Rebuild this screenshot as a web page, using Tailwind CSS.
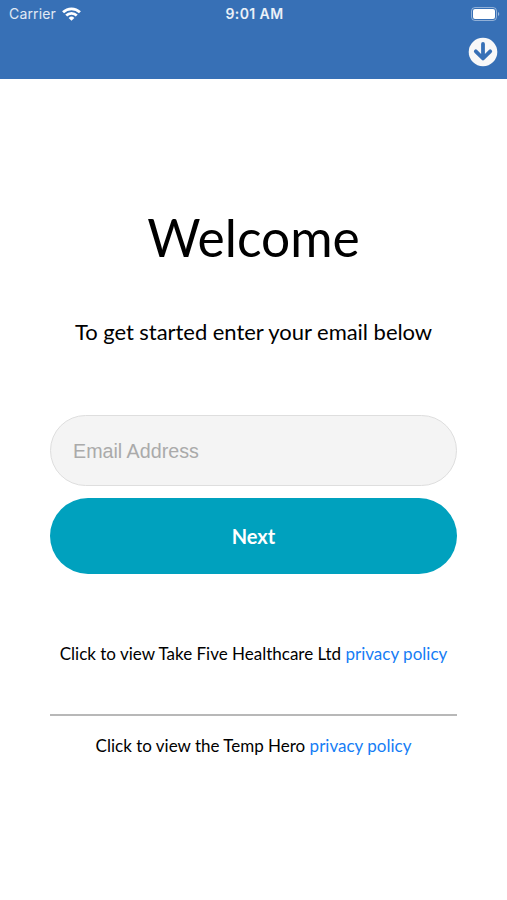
<!DOCTYPE html>
<html lang="en">
<head>
    <meta charset="UTF-8">
    <meta name="viewport" content="width=device-width, initial-scale=1.0">
    <title>Welcome</title>
    <script src="https://cdn.jsdelivr.net/npm/@tailwindcss/browser@4"></script>
</head>
<body class="h-[900px] overflow-hidden bg-white font-['Lato',sans-serif] text-black">
    <header class="h-[79px] bg-[#3770b6] text-white">
        <div class="grid h-[27px] grid-cols-3 items-center pl-[9px] pr-[7px] font-['Inter',sans-serif] text-[14px]">
            <div class="flex items-center gap-1.5">
                <span class="tracking-[0.15px] text-white/85">Carrier</span>
                <svg class="h-[14px] w-[19px]" viewBox="0 0 18 13" fill="none" stroke="currentColor" stroke-width="2.6">
                    <path d="M1 4.8a11.5 11.500 0 0 1 16 0"/>
                    <path d="M4 8a7.200 7.200 0 0 1 10 0"/>
                    <path d="M9 13 6.300 10.200a4 4 0 0 1 5.400 0z" fill="currentColor" stroke="none"/>
                </svg>
            </div>
            <div class="text-center text-[14px] font-semibold tracking-[0.4px] text-white/90">9:01 AM</div>
            <svg class="h-[14px] w-[29px] justify-self-end" viewBox="0 0 29 14">
                <rect x=".5" y=".5" width="25" height="13" rx="3.5" fill="none" stroke="white" stroke-opacity=".45"/>
                <rect x="2" y="2" width="22" height="10" rx="2" fill="white"/>
                <path d="M27 5v4a2.200 2.200 0 0 0 0-4z" fill="white" fill-opacity=".5"/>
            </svg>
        </div>
        <div class="flex justify-end pr-[9px] pt-[10px]">
            <svg class="size-[30px]" viewBox="0 0 30 30">
                <circle cx="15" cy="15" r="14.300" fill="#f8f8f8"/>
                <path d="M15 7v14M7.800 14.300 15 21.500l7.200-7.200" fill="none" stroke="#3770b6" stroke-width="3.800" stroke-linecap="round" stroke-linejoin="round"/>
            </svg>
        </div>
    </header>

    <main class="px-[50px] text-center">
        <h1 class="pt-[122px] text-[51.5px] leading-[72px]">Welcome</h1>
        <p class="mt-[43px] text-[22px] leading-8 tracking-[-0.04px]">To get started enter your email below</p>
        <form class="mt-[67px]">
            <input type="email" placeholder="Email Address" class="block h-[71px] w-full rounded-full border border-[#dedede] bg-[#f4f4f4] px-[22px] pt-0.5 font-['Liberation_Sans',sans-serif] text-[19.7px] placeholder:text-[#aaaaaa]">
            <button type="button" class="mt-3 block h-[76px] w-full rounded-full bg-[#00a1be] text-[20px] font-bold text-white">Next</button>
        </form>
        <p class="mt-[68px] text-[17px] leading-6 whitespace-nowrap">Click to view Take Five Healthcare Ltd <a href="#" class="text-[#167df5]">privacy policy</a></p>
        <hr class="mt-[48px] border-t-2 border-[#b8b8b8]">
        <p class="mt-[18px] text-[17px] leading-6">Click to view the Temp Hero <a href="#" class="text-[#167df5]">privacy policy</a></p>
    </main>
</body>
</html>
